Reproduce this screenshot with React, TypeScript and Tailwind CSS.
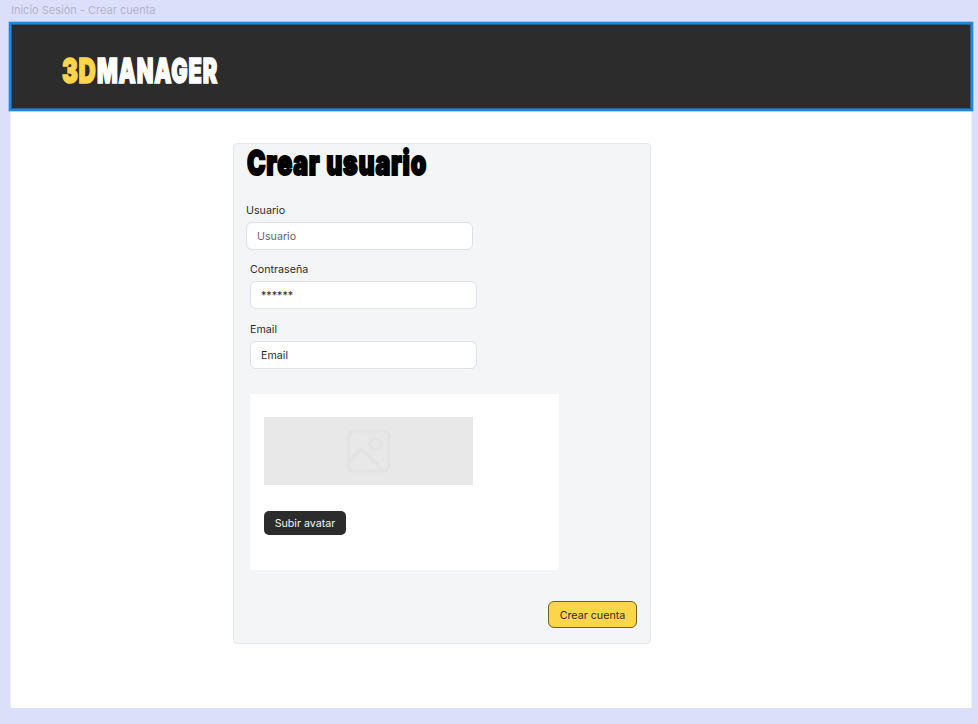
import type { ReactNode } from 'react';

function Field({ label, value, className = '', muted = false }: { label: string; value: string; className?: string; muted?: boolean }) {
  return (
    <div className={`w-[227px] ${className}`}>
      <div className="h-[19px] pt-px text-[10.7px] leading-[14px] text-[#2c2c2c]">{label}</div>
      <div className={`flex h-7 items-center rounded-[6px] border border-[#dfe1e4] bg-white px-[10px] pt-0.5 text-[10.7px] ${muted ? 'text-[#5c6670]' : 'text-[#2c2c2c]'}`}>
        {value}
      </div>
    </div>
  );
}

function Display({ children, className }: { children: ReactNode; className: string }) {
  return <span className={`inline-block origin-left whitespace-nowrap font-black ${className}`}>{children}</span>;
}

function ImagePlaceholder() {
  return (
    <div className="flex h-[68px] w-[209px] items-center justify-center bg-[#e8e8e8]">
      <svg width="44" height="44" viewBox="0 0 44 44" fill="none" stroke="#e3e3e3" strokeWidth="3.2" strokeLinejoin="round">
        <rect x="1.6" y="2" width="40" height="40" rx="5" />
        <circle cx="28.6" cy="15" r="5.5" />
        <path d="M2 32.5 14.5 20 36 41.5" />
      </svg>
    </div>
  );
}

export default function App() {
  return (
    <div className="h-[724px] w-[978px] overflow-hidden bg-[#dcdffa] font-['Inter',sans-serif] text-[#2c2c2c]">
      <div className="h-[22px] pl-[11px] pt-[3px] text-[11px] leading-[14px] text-[#b2b3ca]">Inicio Sesión - Crear cuenta</div>
      <div className="relative ml-[9px] h-[89px] w-[964px] border-2 border-[#1789e6] bg-[#2c2c2c] pl-[51px] pt-[27px] shadow-[0_0_0_0.5px_#5aa9ef,inset_0_0_0_1px_#2c5f8c]">
        <div className="flex h-10 text-[34.5px] leading-10">
          <div className="w-[35px]">
            <Display className="scale-x-[0.69] tracking-[1px] text-[#ffd54a] [-webkit-text-stroke:1.6px_#ffd54a]">3D</Display>
          </div>
          <Display className="scale-x-[0.63] tracking-[1.3px] text-white [-webkit-text-stroke:1.6px_#fff]">MANAGER</Display>
        </div>
      </div>
      <main className="ml-[10px] h-[597px] w-[962px] border-x border-[#eeeffd] bg-white pl-[222px] pt-8">
        <section className="h-[501px] w-[418px] rounded-[4px] border border-[#e7e8ea] bg-[#f4f5f7] pl-3">
          <h1 className="h-[59px] pl-px text-[34px] leading-[37px] text-black">
            <Display className="scale-x-[0.73] tracking-[1.1px] [-webkit-text-stroke:2px_#000]">Crear usuario</Display>
          </h1>
          <Field label="Usuario" value="Usuario" muted />
          <Field label="Contraseña" value="******" className="ml-1 mt-3" />
          <Field label="Email" value="Email" className="ml-1 mt-[13px]" />
          <div className="ml-1 mt-[25px] h-[176px] w-[309px] bg-white pl-[14px] pt-[23px]">
            <ImagePlaceholder />
            <button className="mt-[26px] block h-6 w-[82px] rounded-[5px] bg-[#2c2c2c] pt-px text-[10.7px] leading-[23px] text-[#f4f4f4]">Subir avatar</button>
          </div>
          <button className="ml-[302px] mt-[31px] block h-[27px] w-[89px] rounded-[6px] border border-[#6b602f] bg-[#ffd54a] pt-[3px] text-[10.7px] text-[#2c2c2c]">Crear cuenta</button>
        </section>
      </main>
    </div>
  );
}
